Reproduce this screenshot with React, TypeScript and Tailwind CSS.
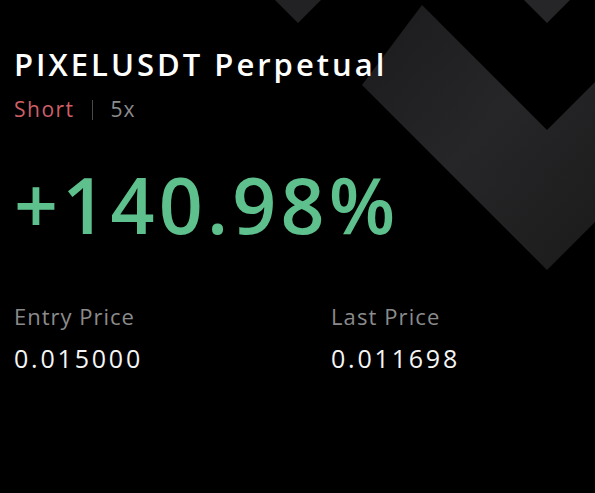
export default function App() {
  return (
    <div className="relative w-[595px] h-[493px] overflow-hidden bg-black font-['Open_Sans',sans-serif]">
      {/* background chevrons */}
      <svg className="absolute inset-0" width="595" height="493" viewBox="0 0 595 493">
        <defs>
          <linearGradient id="band" x1="0" y1="0" x2="1" y2="1">
            <stop offset="0" stopColor="#1b1b1d" />
            <stop offset="0.5" stopColor="#262628" />
            <stop offset="1" stopColor="#1b1b1c" />
          </linearGradient>
        </defs>
        <polygon points="275,0 321,0 298,23" fill="#222224" />
        <polygon points="524,0 570,0 547,23" fill="#262628" />
        <polygon points="422,5 547,130 595,82 595,222 547,270 362,85" fill="url(#band)" />
      </svg>

      <div className="relative flex flex-col pl-[14px] pt-[49px]">
        <h1 className="text-[31px] leading-none font-semibold tracking-[3px] text-white">PIXELUSDT Perpetual</h1>

        <div className="mt-[19px] flex items-center text-[21px] leading-none">
          <span className="tracking-[1.5px] text-[#cf5f66]">Short</span>
          <span className="mr-[18px] ml-[17px] h-[20px] w-px bg-[#4a4a4a]" />
          <span className="tracking-[1px] text-[#8c8c8c]">5x</span>
        </div>

        <div className="mt-[46px] text-[77px] leading-none font-semibold tracking-[4.2px] text-[#5ec08d]">+140.98%</div>

        <div className="mt-[62px] grid grid-cols-[317px_1fr]">
          <div className="flex flex-col">
            <span className="text-[22px] leading-none tracking-[1px] text-[#8b8b8b]">Entry Price</span>
            <span className="mt-[19px] text-[25px] leading-none font-medium tracking-[2.8px] text-[#f5f5f5]">0.015000</span>
          </div>
          <div className="flex flex-col">
            <span className="text-[22px] leading-none tracking-[1.1px] text-[#8b8b8b]">Last Price</span>
            <span className="mt-[19px] text-[25px] leading-none font-medium tracking-[2.8px] text-[#f5f5f5]">0.011698</span>
          </div>
        </div>
      </div>
    </div>
  )
}
